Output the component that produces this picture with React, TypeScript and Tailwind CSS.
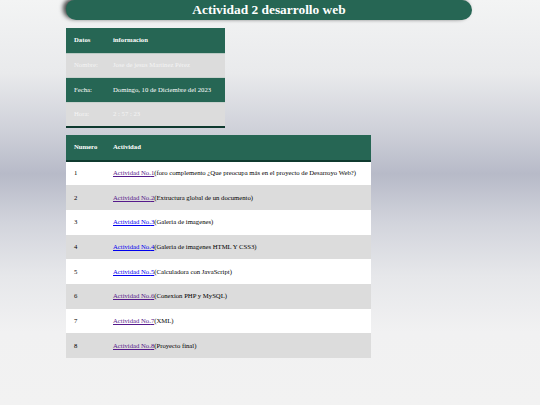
import React from "react";

const datos = [
  { k: "Nombre:", v: "Jose de jesus Martinez Pérez", green: false },
  { k: "Fecha:", v: "Domingo, 10 de Diciembre del 2023", green: true },
  { k: "Hora:", v: "2 : 57 : 23", green: false },
];

const actividades = [
  { n: 1, desc: "(foro complemento ¿Que preocupa más en el proyecto de Desarroyo Web?)", visited: true },
  { n: 2, desc: "(Extructura global de un documento)", visited: true },
  { n: 3, desc: "(Galeria de imagenes)", visited: false },
  { n: 4, desc: "(Galeria de imagenes HTML Y CSS3)", visited: false },
  { n: 5, desc: "(Calculadora con JavaScript)", visited: false },
  { n: 6, desc: "(Conexion PHP y MySQL)", visited: true },
  { n: 7, desc: "(XML)", visited: true },
  { n: 8, desc: "(Proyecto final)", visited: true },
];

export default function App() {
  return (
    <div className="min-h-[405px] w-full bg-[linear-gradient(to_bottom,#f3f4f4_0%,#e9eaec_18%,#cdcfd8_33%,#b7bac8_43%,#d2d4dc_55%,#e6e7ea_68%,#f1f1f2_82%,#f2f2f2_100%)] font-[family-name:'Liberation_Serif',serif] pl-[66px]">
      {/* Title bar */}
      <div className="w-[406px] h-[20px] rounded-b-[12px] rounded-tl-[10px] rounded-tr-[12px] bg-[#266654] shadow-[-3px_-1px_4px_rgba(0,0,0,0.7)] flex items-center justify-center">
        <h1 className="text-white font-bold text-[13.4px] leading-none">Actividad 2 desarrollo web</h1>
      </div>

      {/* Datos */}
      <table className="mt-[8px] w-[159px] border-collapse text-[6.7px] border-b-[2px] border-[#0f3a2f]">
        <thead>
          <tr className="bg-[#266654] h-[25px] border-b border-[#b9c9c3]">
            <th className="w-[47px] pl-[8px] text-left font-bold text-white">Datos</th>
            <th className="text-left font-bold text-white">informacion</th>
          </tr>
        </thead>
        <tbody>
          {datos.map((d) => (
            <tr
              key={d.k}
              className={`h-[24.5px] border-b border-[#c9d1ce] ${d.green ? "bg-[#266654] text-white" : "bg-[#dcdcdc] text-[#f4f4f4]"}`}
            >
              <td className="pl-[8px]">{d.k}</td>
              <td className="whitespace-nowrap pr-[6px]">{d.v}</td>
            </tr>
          ))}
        </tbody>
      </table>

      {/* Actividades */}
      <table className="mt-[7px] w-[305px] border-collapse text-[6.7px]">
        <thead>
          <tr className="bg-[#266654] h-[26px] border-b-[2px] border-[#0f3a2f]">
            <th className="w-[47px] pl-[8px] text-left font-bold text-white">Numero</th>
            <th className="text-left font-bold text-white">Actividad</th>
          </tr>
        </thead>
        <tbody>
          {actividades.map((a) => (
            <tr key={a.n} className={`h-[24.7px] ${a.n % 2 === 0 ? "bg-[#dcdcdc]" : "bg-white"} text-black`}>
              <td className="pl-[8px]">{a.n}</td>
              <td className="whitespace-nowrap">
                <a
                  href="#"
                  className={`underline ${a.visited ? "text-[#551a8b]" : "text-[#0000ee]"}`}
                >
                  Actividad No.{a.n}
                </a>
                {a.desc}
              </td>
            </tr>
          ))}
        </tbody>
      </table>
    </div>
  );
}
